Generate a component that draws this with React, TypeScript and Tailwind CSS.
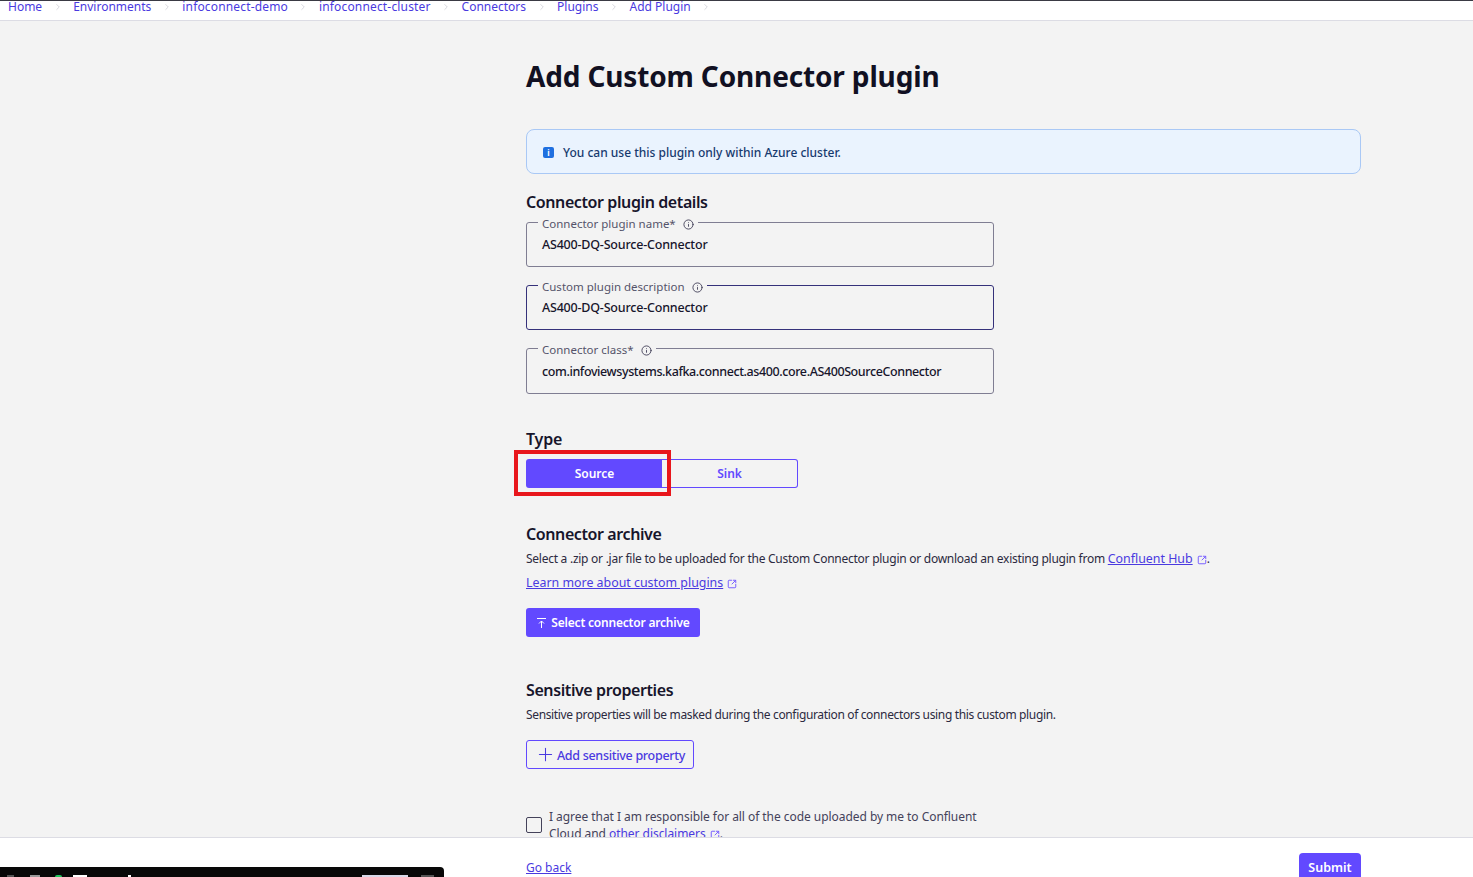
import React from 'react';
import { ChevronRight, Info, Plus, SquareArrowOutUpRight } from 'lucide-react';

const crumbs = ['Home', 'Environments', 'infoconnect-demo', 'infoconnect-cluster', 'Connectors', 'Plugins', 'Add Plugin'];

const InfoIcon = () => <Info className="w-[11px] h-[11px] text-[#44425a]" strokeWidth={2} />;

const LinkOut = () => (
  <SquareArrowOutUpRight className="inline-block w-[10px] h-[10px] ml-[4px] text-[#7a62ff]" strokeWidth={2.4} />
);

interface FieldProps {
  label: string;
  value: string;
  dark?: boolean;
  className?: string;
  valueClassName?: string;
}

// outlined input with the label sitting in the border
const Field: React.FC<FieldProps> = ({ label, value, dark, className, valueClassName }) => (
  <div
    className={`relative w-[468px] border rounded-[3px] pl-[15px] flex items-center pt-[2px] ${
      dark ? 'border-[#35317a]' : 'border-[#7f7d92]'
    } ${className ?? ''}`}
  >
    <div className="absolute left-[11px] -top-[8px] h-[18px] px-[4px] bg-[#f3f3f3] flex items-center gap-[7px] text-[11.5px] text-[#55536a]">
      <span>{label}</span>
      <InfoIcon />
    </div>
    <span className={`text-[12.5px] font-medium text-[#17152b] ${valueClassName ?? 'tracking-[-0.2px]'}`}>{value}</span>
  </div>
);

export default function App() {
  return (
    <div className="relative h-[877px] w-full overflow-hidden flex flex-col bg-[#f3f3f3] font-['Noto_Sans',sans-serif] text-[#17152b]">
      {/* Breadcrumb */}
      <div className="h-[21px] shrink-0 bg-white border-t border-t-[#3a3a44] border-b border-b-[#dcdce4] flex items-end pl-[8px] overflow-hidden">
        <div className="flex items-center h-[12px] mb-[7px] text-[12px] text-[#4a3ae0]">
          {crumbs.map((c) => (
            <React.Fragment key={c}>
              <span className={c.startsWith('infoconnect') ? 'tracking-[0.16px]' : ''}>{c}</span>
              <ChevronRight className="w-[10px] h-[10px] mx-[10.5px] text-[#d0d0d8]" />
            </React.Fragment>
          ))}
        </div>
      </div>

      {/* Main */}
      <div className="flex-1 min-h-0 overflow-hidden pl-[526px] pr-[112px]">
        <h1 className="mt-[35px] h-[40px] leading-[40px] text-[28px] font-bold text-[#111022] tracking-[-0.15px]">
          Add Custom Connector plugin
        </h1>

        <div className="mt-[33px] h-[45px] rounded-[8px] border border-[#a9c8f5] bg-[#eaf3fe] flex items-center pt-[2px] pl-[16px] gap-[9px] text-[12px] font-medium text-[#173a6e]">
          <span className="w-[11px] h-[11px] rounded-[2px] bg-[#1f6fe0] text-white flex items-center justify-center text-[8px] font-bold leading-none">i</span>
          <span>You can use this plugin only within Azure cluster.</span>
        </div>

        <h2 className="mt-[18px] h-[21px] leading-[21px] text-[16px] font-semibold tracking-[-0.4px]">Connector plugin details</h2>
        <Field className="mt-[9px] h-[45px]" label="Connector plugin name*" value="AS400-DQ-Source-Connector" />
        <Field className="mt-[18px] h-[45px]" dark label="Custom plugin description" value="AS400-DQ-Source-Connector" />
        <Field
          className="mt-[18px] h-[46px]"
          label="Connector class*"
          value="com.infoviewsystems.kafka.connect.as400.core.AS400SourceConnector"
          valueClassName="tracking-[-0.4px]"
        />

        <h2 className="mt-[35px] h-[21px] leading-[21px] text-[16px] font-semibold tracking-[-0.2px]">Type</h2>
        <div className="mt-[9px] flex w-[272px] h-[29px] text-[12px] font-semibold">
          <div className="w-[136px] pl-[1px] bg-[#6249ff] rounded-l-[3px] text-white flex items-center justify-center">Source</div>
          <div className="flex-1 border border-l-0 border-[#6249ff] rounded-r-[3px] text-[#6249ff] flex items-center justify-center">Sink</div>
        </div>

        <h2 className="mt-[36px] h-[21px] leading-[21px] text-[16px] font-semibold tracking-[-0.4px]">Connector archive</h2>
        <p className="mt-[5px] h-[18px] leading-[18px] text-[12px] text-[#2c2a40] tracking-[-0.26px] whitespace-nowrap">
          Select a .zip or .jar file to be uploaded for the Custom Connector plugin or download an existing plugin from{' '}
          <span className="text-[12.4px] tracking-[0px] text-[#4a3ae0] underline">Confluent Hub</span>
          <LinkOut />.
        </p>
        <p className="mt-[6px] h-[18px] leading-[18px] text-[12.4px]">
          <span className="text-[#4a3ae0] underline">Learn more about custom plugins</span>
          <LinkOut />
        </p>
        <button className="mt-[16px] h-[29px] w-[174px] rounded-[3px] bg-[#6249ff] text-white text-[12px] font-semibold flex items-center justify-center gap-[4px] tracking-[-0.2px]">
          <svg width="11" height="12" viewBox="0 0 11 12" fill="none" stroke="currentColor" strokeWidth="1">
            <path d="M1 1.5h9M5.5 11V4M3 6.5l2.5-2.5 2.5 2.5" />
          </svg>
          Select connector archive
        </button>

        <h2 className="mt-[43px] h-[21px] leading-[21px] text-[16px] font-semibold tracking-[-0.4px]">Sensitive properties</h2>
        <p className="mt-[5px] h-[18px] leading-[18px] text-[12px] text-[#2c2a40] tracking-[-0.35px]">
          Sensitive properties will be masked during the configuration of connectors using this custom plugin.
        </p>
        <button className="mt-[16px] h-[29px] w-[168px] rounded-[3px] border border-[#6249ff] text-[#4a3ae0] text-[12.5px] font-medium flex items-center justify-center gap-[1px] tracking-[-0.3px]">
          <Plus className="w-[21px] h-[21px]" strokeWidth={1.2} />
          <span className="pt-[3px]">Add sensitive property</span>
        </button>

        <div className="mt-[39px] flex items-center gap-[7px] w-[468px]">
          <span className="w-[16px] h-[16px] shrink-0 rounded-[2px] border border-[#44425a]" />
          <p className="text-[12px] leading-[17px] text-[#44425a] w-[440px] tracking-[-0.05px]">
            I agree that I am responsible for all of the code uploaded by me to Confluent Cloud and{' '}
            <span className="text-[#4a3ae0]">other disclaimers</span>
            <LinkOut />.
          </p>
        </div>
      </div>

      {/* Footer */}
      <div className="h-[40px] shrink-0 bg-white border-t border-[#dcdce4] flex items-start justify-between pl-[526px] pr-[112px] pt-[15px]">
        <span className="h-[28px] leading-[30px] text-[12px] text-[#4a3ae0] underline">Go back</span>
        <button className="h-[30px] w-[62px] rounded-[4px] bg-[#6249ff] text-white text-[12.5px] font-semibold">Submit</button>
      </div>

      {/* Red highlight drawn on the screenshot */}
      <div className="absolute left-[514px] top-[450px] w-[157px] h-[46px] border-[4px] border-[#e8161c]" />

      {/* Recorder bar cut off at the bottom, only the tops of its contents show */}
      <div className="absolute left-0 top-[867px] w-[444px] h-[20px] bg-[#080808] rounded-tr-[4px]">
        <span className="absolute left-[7px] top-[8px] w-[7px] h-[2px] bg-[#555]" />
        <span className="absolute left-[30px] top-[8px] w-[10px] h-[2px] bg-[#999]" />
        <span className="absolute left-[55px] top-[8px] w-[7px] h-[2px] rounded-t-full bg-[#22c55e]" />
        <span className="absolute left-[73px] top-[8px] w-[14px] h-[2px] bg-white" />
        <span className="absolute left-[128px] top-[8px] w-[3px] h-[2px] bg-white" />
        <span className="absolute left-[362px] top-[8px] w-[46px] h-[2px] bg-[#d8d8e8]" />
        <span className="absolute left-[421px] top-[8px] w-[13px] h-[2px] bg-[#555]" />
      </div>
    </div>
  );
}
